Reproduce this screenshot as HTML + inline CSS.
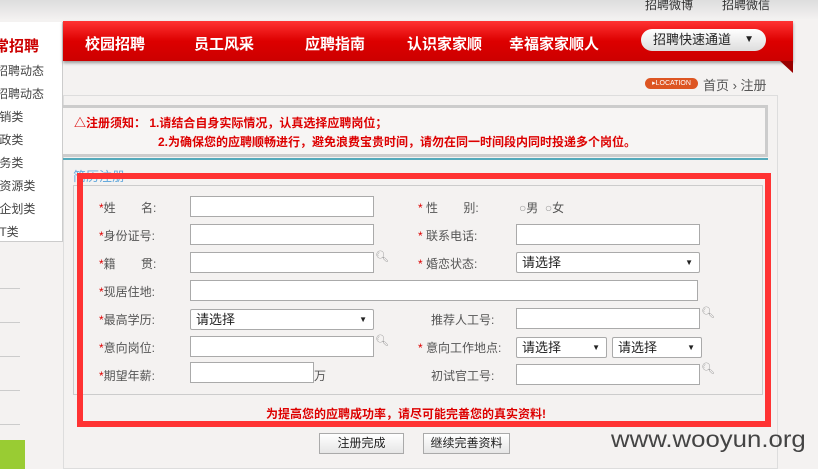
<!DOCTYPE html>
<html><head><meta charset="utf-8"><style>
*{margin:0;padding:0;box-sizing:border-box}
html,body{width:818px;height:469px;overflow:hidden}
body{background:#f4f2f1;font-family:"Liberation Sans","Noto Sans CJK SC","WenQuanYi Zen Hei",sans-serif;font-size:12px;color:#555;position:relative}
.a{position:absolute}
.inp{position:absolute;height:21px;border:1px solid #aaa;background:#fff}
.sel{position:absolute;height:21px;border:1px solid #aaa;background:#fff;font-size:13px;color:#222;padding-left:5px;line-height:19px;border-radius:2px}
.sel:after{content:"▼";position:absolute;right:6px;top:0;font-size:8px}
.lb{position:absolute;font-size:12px;color:#555}
.lb b{color:#d00;font-weight:normal}
.mag{position:absolute;font-size:11px;color:#999}
</style></head><body>
<div class="a" style="left:0;top:0;width:818px;height:20px;background:linear-gradient(#ddd,#f4f2f1)"></div>
<div class="a" style="left:645px;top:-4px;font-size:12px;color:#333">招聘微博</div>
<div class="a" style="left:722px;top:-4px;font-size:12px;color:#333">招聘微信</div>
<div class="a" style="left:0;top:22px;width:63px;height:220px;background:#fff;border-right:1px solid #ccc;border-bottom:1px solid #ccc"></div>
<div class="a" style="left:-6px;top:35px;font-size:15px;font-weight:bold;color:#c00">常招聘</div>
<div class="a" style="left:-4px;top:60px;font-size:12px;color:#444;line-height:23px">招聘动态<br>招聘动态<br>&nbsp;销类<br>&nbsp;政类<br>&nbsp;务类<br>&nbsp;资源类<br>&nbsp;企划类<br>&nbsp;T类</div>
<div class="a" style="left:0;top:255px;width:20px;height:180px;background:repeating-linear-gradient(#f4f2f1 0 33px,#ccc 33px 34px)"></div>
<div class="a" style="left:0;top:440px;width:25px;height:29px;background:#9c3"></div>
<div class="a" style="left:63px;top:21px;width:730px;height:40px;background:linear-gradient(#f33,#d00 50%,#c00);box-shadow:0 2px 3px #999"></div>
<div class="a" style="left:780px;top:61px;width:0;height:0;border-left:13px solid transparent;border-top:12px solid #900"></div>
<div class="a" style="left:85px;top:33px;font-size:15px;font-weight:bold;color:#fff">校园招聘</div>
<div class="a" style="left:194px;top:33px;font-size:15px;font-weight:bold;color:#fff">员工风采</div>
<div class="a" style="left:305px;top:33px;font-size:15px;font-weight:bold;color:#fff">应聘指南</div>
<div class="a" style="left:407px;top:33px;font-size:15px;font-weight:bold;color:#fff">认识家家顺</div>
<div class="a" style="left:509px;top:33px;font-size:15px;font-weight:bold;color:#fff">幸福家家顺人</div>
<div class="a" style="left:641px;top:29px;width:125px;height:22px;border-radius:11px;background:linear-gradient(#fff,#ddd);font-size:13px;color:#222;padding-left:12px;line-height:22px">招聘快速通道 <span style="position:absolute;right:12px;font-size:10px">▼</span></div>
<div class="a" style="left:645px;top:78px;width:53px;height:11px;border-radius:6px;background:#d52;color:#fff;font-size:7px;line-height:11px;text-align:center">▸LOCATION</div>
<div class="a" style="left:703px;top:75px;font-size:13px;color:#555">首页 › 注册</div>
<div class="a" style="left:63px;top:95px;width:715px;height:374px;border:1px solid #ddd;background:#f4f2f1"></div>
<div class="a" style="left:63px;top:105px;width:705px;height:52px;border:3px solid #ccc;border-left:0;background:#f7f5f4"></div>
<div class="a" style="left:74px;top:114px;font-size:12px;font-weight:bold;color:#d00">△注册须知： 1.请结合自身实际情况，认真选择应聘岗位；</div>
<div class="a" style="left:158px;top:133px;font-size:12px;font-weight:bold;color:#d00">2.为确保您的应聘顺畅进行，避免浪费宝贵时间，请勿在同一时间段内同时投递多个岗位。</div>
<div class="a" style="left:63px;top:158px;width:705px;height:2px;background:#5ab"></div>
<div class="a" style="left:73px;top:166px;font-size:13px;color:#6ad">简历注册</div>
<div class="a" style="left:73px;top:185px;width:690px;height:210px;border:1px solid #ccc"></div>
<div class="a" style="left:77px;top:173px;width:694px;height:254px;border:6px solid #f33"></div>
<div class="lb" style="left:99px;top:199px"><b>*</b>姓　&nbsp;&nbsp;&nbsp;&nbsp;名:</div>
<div class="inp" style="left:190px;top:196px;width:184px"></div>
<div class="lb" style="left:418px;top:199px"><b>*</b> 性　&nbsp;&nbsp;&nbsp;&nbsp;别: </div>
<div class="lb" style="left:519px;top:199px"><span style="color:#999">○</span>男 &nbsp;<span style="color:#999">○</span>女</div>
<div class="lb" style="left:99px;top:227px"><b>*</b>身份证号:</div>
<div class="inp" style="left:190px;top:224px;width:184px"></div>
<div class="lb" style="left:418px;top:227px"><b>*</b> 联系电话:</div>
<div class="inp" style="left:516px;top:224px;width:184px"></div>
<div class="lb" style="left:99px;top:255px"><b>*</b>籍　&nbsp;&nbsp;&nbsp;&nbsp;贯:</div>
<div class="inp" style="left:190px;top:252px;width:184px"></div><div class="mag" style="left:375px;top:250px">🔍︎</div>
<div class="lb" style="left:418px;top:255px"><b>*</b> 婚恋状态:</div>
<div class="sel" style="left:516px;top:252px;width:184px">请选择</div>
<div class="lb" style="left:99px;top:283px"><b>*</b>现居住地:</div>
<div class="inp" style="left:190px;top:280px;width:508px"></div>
<div class="lb" style="left:99px;top:311px"><b>*</b>最高学历:</div>
<div class="sel" style="left:190px;top:309px;width:184px">请选择</div>
<div class="lb" style="left:431px;top:311px">推荐人工号:</div>
<div class="inp" style="left:516px;top:308px;width:184px"></div><div class="mag" style="left:701px;top:306px">🔍︎</div>
<div class="lb" style="left:99px;top:339px"><b>*</b>意向岗位:</div>
<div class="inp" style="left:190px;top:336px;width:184px"></div><div class="mag" style="left:375px;top:334px">🔍︎</div>
<div class="lb" style="left:418px;top:339px"><b>*</b> 意向工作地点:</div>
<div class="sel" style="left:516px;top:337px;width:91px">请选择</div>
<div class="sel" style="left:612px;top:337px;width:90px">请选择</div>
<div class="lb" style="left:99px;top:367px"><b>*</b>期望年薪:</div>
<div class="inp" style="left:190px;top:362px;width:124px"></div>
<div class="lb" style="left:314px;top:367px">万</div>
<div class="lb" style="left:431px;top:367px">初试官工号:</div>
<div class="inp" style="left:516px;top:364px;width:184px"></div><div class="mag" style="left:701px;top:362px">🔍︎</div>
<div class="a" style="left:266px;top:405px;font-size:12px;font-weight:bold;color:#d00">为提高您的应聘成功率，请尽可能完善您的真实资料!</div>
<div class="a" style="left:319px;top:433px;width:85px;height:21px;border:1px solid #aaa;background:linear-gradient(#fff,#e6e6e6);font-size:12px;color:#222;text-align:center;line-height:19px">注册完成</div>
<div class="a" style="left:423px;top:433px;width:87px;height:21px;border:1px solid #aaa;background:linear-gradient(#fff,#e6e6e6);font-size:12px;color:#222;text-align:center;line-height:19px">继续完善资料</div>
<div class="a" style="left:611px;top:426px;font-size:23px;color:#444;transform:scaleX(1.12);transform-origin:left">www.wooyun.org</div>
</body></html>
